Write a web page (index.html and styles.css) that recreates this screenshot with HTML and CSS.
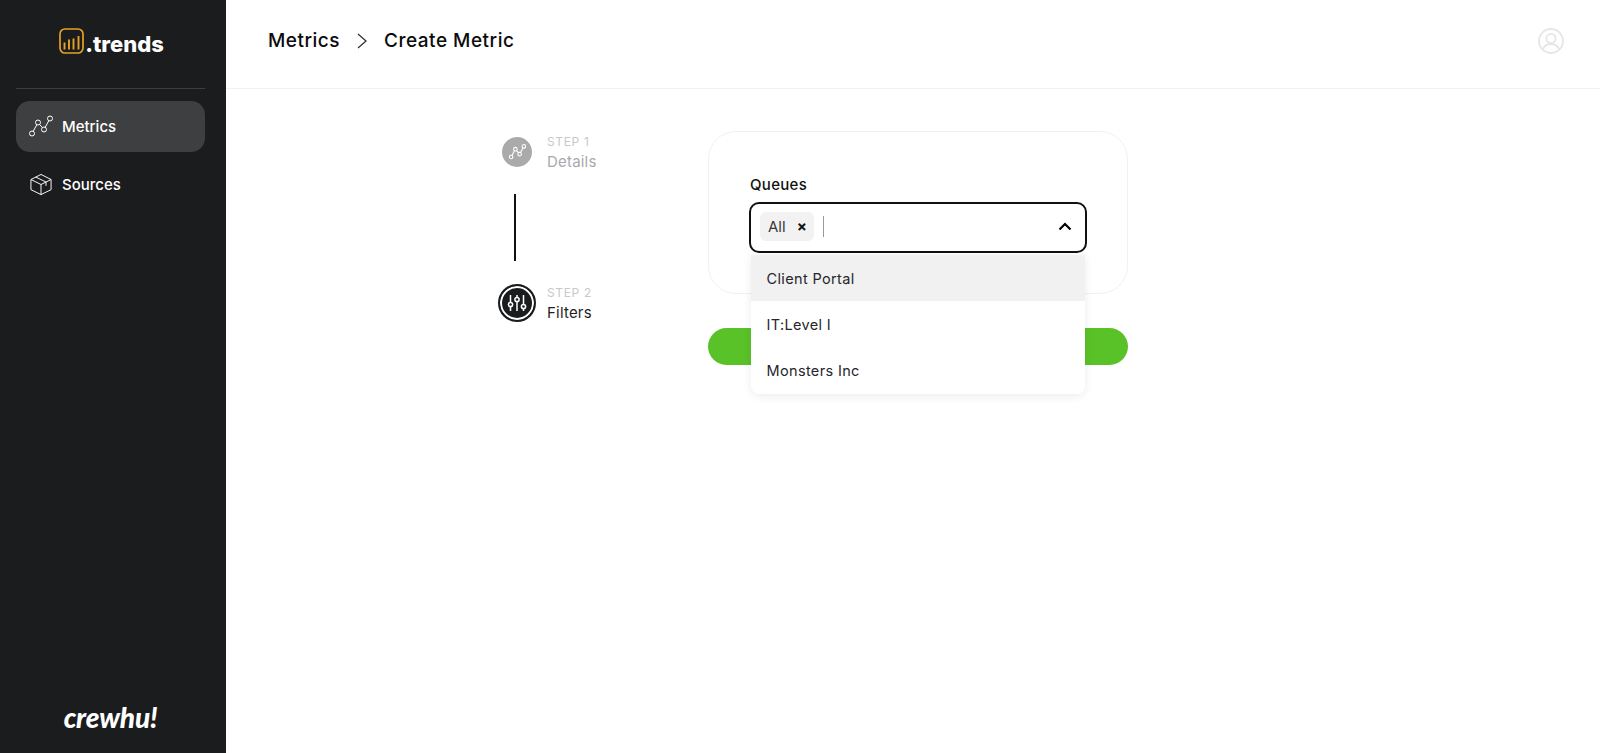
FILE: index.html
```html
<!DOCTYPE html>
<html lang="en">
<head>
<meta charset="utf-8">
<title>Create Metric</title>
<link rel="stylesheet" href="styles.css">
</head>
<body>
<div class="app">
  <aside class="sidebar">
    <div class="brand">
      <svg class="brand-icon" viewBox="0 0 25 26" fill="none">
        <rect x="1" y="1" width="23" height="24" rx="5" stroke="#e8a027" stroke-width="1.7"/>
        <path d="M5.5 21.5v-7M10 21.5v-10M14.5 21.5v-11M19.5 21.5v-13.5" stroke="#e8a027" stroke-width="1.9"/>
      </svg>
      <span class="brand-name">.trends</span>
    </div>
    <nav class="nav">
      <a class="nav-item active">
        <svg class="nav-icon" viewBox="0 0 24 22" fill="none" stroke="#fff" stroke-width="1">
          <circle cx="3" cy="18" r="2.5"/><circle cx="9" cy="7" r="2.5"/><circle cx="15" cy="14" r="2.5"/><circle cx="21" cy="3" r="2.5"/>
          <path d="M4.2 15.8 7.8 9.2M10.6 9 13.4 12M16.2 11.8 19.8 5.2"/>
        </svg>
        <span>Metrics</span>
      </a>
      <a class="nav-item">
        <svg class="nav-icon" viewBox="0 0 24 24" fill="none" stroke="#fff" stroke-width="1" stroke-linejoin="round">
          <path d="M12 1.5 22.5 6.8v10.6L12 22.5 1.5 17.4V6.8z"/>
          <path d="M1.5 6.8 12 12l10.5-5.2M12 12v10.5M6.5 4.2 17.2 9.4v4"/>
        </svg>
        <span>Sources</span>
      </a>
    </nav>
    <div class="crewhu">crewhu!</div>
  </aside>
  <main class="main">
    <header class="topbar">
      <div class="crumbs">
        <span>Metrics</span>
        <svg class="crumb-sep" viewBox="0 0 10 16" fill="none" stroke="#333" stroke-width="1.3"><path d="M1 1l8 7-8 7"/></svg>
        <span>Create Metric</span>
      </div>
      <svg class="user" viewBox="0 0 26 26" fill="none" stroke="#e6e6e6" stroke-width="1.8">
        <circle cx="13" cy="13" r="12"/><circle cx="13" cy="10.5" r="4.6"/><path d="M4.8 21.5c1.2-3.8 4.4-5.5 8.2-5.5s7 1.7 8.2 5.5"/>
      </svg>
    </header>
    <section class="content">
      <div class="steps">
        <div class="step done">
          <div class="step-mark">
            <span class="step-circle small">
              <svg viewBox="0 0 24 22" fill="none" stroke="#fff" stroke-width="1.5">
                <circle cx="3" cy="18" r="2.5"/><circle cx="9" cy="7" r="2.5"/><circle cx="15" cy="14" r="2.5"/><circle cx="21" cy="3" r="2.5"/>
                <path d="M4.2 15.8 7.8 9.2M10.6 9 13.4 12M16.2 11.8 19.8 5.2"/>
              </svg>
            </span>
          </div>
          <div class="step-text"><div class="step-no">STEP 1</div><div class="step-name">Details</div></div>
        </div>
        <div class="step-line"></div>
        <div class="step current">
          <div class="step-mark">
            <span class="step-circle ring">
              <svg viewBox="0 0 20 20" fill="none" stroke="#fff" stroke-width="1.5">
                <path d="M3.5 2v16M10 2v16M16.5 2v16"/>
                <circle cx="3.5" cy="11.5" r="2.1" fill="#1b1c1e"/><circle cx="10" cy="6.5" r="2.1" fill="#1b1c1e"/><circle cx="16.5" cy="13.5" r="2.1" fill="#1b1c1e"/>
              </svg>
            </span>
          </div>
          <div class="step-text"><div class="step-no">STEP 2</div><div class="step-name">Filters</div></div>
        </div>
      </div>
      <div class="form">
        <div class="card">
          <label class="label">Queues</label>
          <div class="select">
            <span class="chip">All<span class="chip-x">×</span></span>
            <span class="caret"></span>
            <svg class="chevron" viewBox="0 0 14 9" fill="none" stroke="#000" stroke-width="2.2"><path d="M1.5 7.5 7 2l5.5 5.5"/></svg>
            <ul class="menu">
              <li class="option hover">Client Portal</li>
              <li class="option">IT:Level I</li>
              <li class="option">Monsters Inc</li>
            </ul>
          </div>
        </div>
        <button class="next" type="button"></button>
      </div>
    </section>
  </main>
</div>
</body>
</html>
```
FILE: styles.css
```css
* { box-sizing: border-box; }
html, body { margin: 0; height: 100%; }
body { font-family: "Inter", "Liberation Sans", sans-serif; background: #fff; color: #111; overflow: hidden; }
.app { display: flex; height: 753px; }

.sidebar { width: 226px; flex: none; background: #1b1c1e; display: flex; flex-direction: column; padding: 0 21px 0 16px; }
.brand { height: 89px; border-bottom: 1px solid #3d3e40; display: flex; justify-content: center; align-items: flex-start; padding: 28px 0 0 2px; gap: 1px; }
.brand-icon { width: 25px; height: 26px; flex: none; }
.brand-name { font-family: "Inter", sans-serif; font-weight: 800; font-size: 22px; line-height: 26px; color: #fff; margin-top: 3px; }
.nav { display: flex; flex-direction: column; gap: 7px; margin-top: 12px; }
.nav-item { height: 51px; border-radius: 14px; display: flex; align-items: center; padding: 0 0 1px 13px; gap: 9px; color: #fff; font-size: 15px; font-weight: 500; }
.nav-item.active { background: #3e3f41; }
.nav-icon { width: 24px; height: 23px; flex: none; }
.crewhu { margin-top: auto; margin-bottom: 22px; text-align: center; color: #fff; font-family: "Lato", sans-serif; font-style: italic; font-weight: 900; font-size: 28px; line-height: 28px; letter-spacing: -0.2px; }

.main { flex: 1; display: flex; flex-direction: column; min-width: 0; }
.topbar { height: 89px; flex: none; border-bottom: 1px solid #f1f1f1; display: flex; align-items: center; justify-content: space-between; padding: 0 36px 7px 42px; }
.crumbs { display: flex; align-items: center; gap: 17px; font-size: 19px; font-weight: 500; color: #0c0c0c; letter-spacing: 0.5px; }
.crumb-sep { width: 10px; height: 16px; }
.user { width: 26px; height: 26px; }

.content { display: flex; padding: 42px 0 0 271px; }
.steps { width: 211px; flex: none; display: flex; flex-direction: column; padding-top: 1px; }
.step { display: flex; align-items: center; height: 40px; }
.step-mark { width: 40px; display: flex; justify-content: center; flex: none; }
.step-circle { display: flex; align-items: center; justify-content: center; border-radius: 50%; }
.step-circle.small { width: 30px; height: 30px; background: #aaa; }
.step-circle.small svg { width: 17px; height: 16px; }
.step-circle.ring { width: 38px; height: 38px; background: #1b1c1e; border: 2px solid #1b1c1e; box-shadow: inset 0 0 0 2px #fff; }
.step-circle.ring svg { width: 20px; height: 20px; }
.step-text { margin-left: 10px; padding-top: 3px; }
.step-no { font-size: 12px; line-height: 16px; font-weight: 400; letter-spacing: 0.65px; color: #c8c8cc; }
.step-name { font-size: 15px; line-height: 22px; margin-top: 1px; letter-spacing: 0.2px; color: #1f1f24; }
.step.done .step-name { color: #a9a9ae; }
.step-line { width: 2px; height: 67px; background: #111; margin: 22px 0 22px 17px; }

.form { width: 420px; flex: none; }
.card { height: 163px; border: 1px solid #f1f1f1; border-radius: 28px; padding: 44px 40px 0; }
.label { display: block; font-size: 15px; line-height: 18px; font-weight: 500; color: #111; margin-left: 1px; margin-bottom: 8px; letter-spacing: 0.3px; }
.select { position: relative; height: 51px; border: 2px solid #111; border-radius: 10px; display: flex; align-items: center; padding: 0 0 2px 9px; }
.chip { display: flex; align-items: center; height: 29px; width: 54px; padding-left: 8px; background: #f2f2f2; border-radius: 6px; font-size: 15px; color: #3a3a3a; }
.chip-x { margin-left: 11px; font-size: 15px; font-weight: 700; color: #111; }
.caret { width: 1px; height: 21px; background: #999; margin-left: 9px; }
.chevron { width: 14px; height: 9px; margin-left: auto; margin-right: 13px; }
.menu { position: absolute; left: 0; right: 0; top: 51px; margin: 0; padding: 0; list-style: none; background: #fff; border-radius: 0 0 8px 8px; box-shadow: 0 2px 10px rgba(0,0,0,.08); overflow: hidden; z-index: 2; }
.option { height: 46.33px; display: flex; align-items: center; padding-left: 15.5px; font-size: 14.5px; color: #26262c; letter-spacing: 0.35px; }
.option.hover { background: #f1f1f1; }
.next { display: block; width: 100%; height: 37px; margin-top: 34px; border: 0; border-radius: 19px; background: #5ac229; padding: 0; }
```
